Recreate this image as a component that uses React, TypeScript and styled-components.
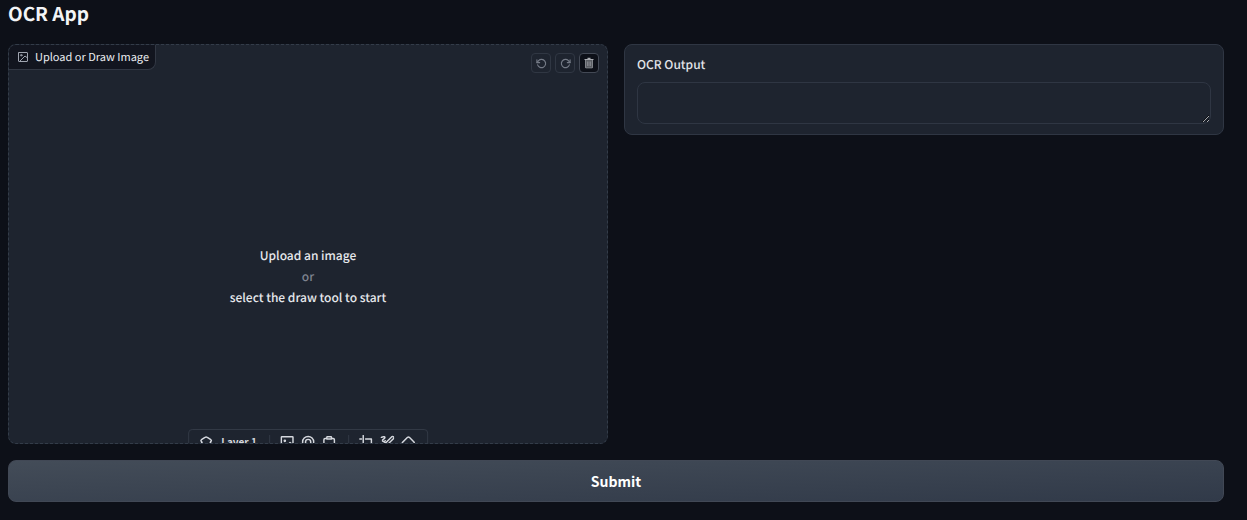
import React from "react";
import styled, { createGlobalStyle, css } from "styled-components";

const GlobalStyle = createGlobalStyle`
  *, *::before, *::after { box-sizing: border-box; }
  body {
    margin: 0;
    background: #0d1018;
    color: #eceef2;
    font-family: "Source Sans Pro", "Noto Sans CJK SC", sans-serif;
    text-rendering: geometricPrecision;
  }
`;

const Page = styled.main`
  display: flex;
  flex-direction: column;
  gap: 16px;
  padding: 0 23px 16px 8px;
`;

const Title = styled.h1`
  margin: 0;
  font-size: 19px;
  line-height: 28px;
  font-weight: 700;
  color: #f3f4f6;
`;

const Columns = styled.div`
  display: grid;
  grid-template-columns: 1fr 1fr;
  align-items: start;
  gap: 16px;
`;

const Editor = styled.section`
  position: relative;
  display: flex;
  align-items: center;
  justify-content: center;
  height: 400px;
  overflow: hidden;
  border: 1px dashed #333c49;
  border-radius: 8px;
  background: #1e242f;
`;

const EditorLabel = styled.h2`
  position: absolute;
  top: 0;
  left: 0;
  display: flex;
  align-items: center;
  gap: 6px;
  height: 25px;
  margin: 0;
  padding: 0 6px 1px 8px;
  border: solid #323844;
  border-width: 0 1px 1px 0;
  border-radius: 0 0 8px 0;
  background: #12151f;
  color: #eceef2;
  font-size: 11px;
  line-height: 16px;
  font-weight: 400;

  svg { color: #a0a5b0; }
`;

const Actions = styled.div`
  position: absolute;
  top: 8px;
  right: 8px;
  display: flex;
  gap: 4px;
`;

const ActionButton = styled.button<{ $active?: boolean }>`
  display: flex;
  align-items: center;
  justify-content: center;
  width: 20px;
  height: 20px;
  padding: 0;
  border: 1px solid #303743;
  border-radius: 4px;
  background: transparent;
  color: #747a86;

  ${({ $active }) =>
    $active &&
    css`
      border-color: #434955;
      background: #0d1018;
      color: #a9abb0;
    `}
`;

const Prompt = styled.div`
  padding-top: 65px;
  text-align: center;
  font-size: 12px;
  line-height: 21px;
  font-weight: 500;
  color: #e6e8ec;
`;

const PromptLine = styled.p<{ $muted?: boolean }>`
  margin: 0;
  color: ${({ $muted }) => ($muted ? "#7e838f" : "inherit")};
`;

const Toolbar = styled.div`
  position: absolute;
  top: 384px;
  left: 50%;
  transform: translateX(-50%);
  display: flex;
  align-items: center;
  height: 26px;
  padding: 0 12px 0 10px;
  border: 1px solid #323945;
  border-radius: 4px;
  color: #d5d8de;
`;

const ToolGroup = styled.div`
  display: flex;
  align-items: center;
  gap: 7px;

  & + & {
    margin-left: 12px;
    padding-left: 10px;
    border-left: 1px solid #323945;
  }
`;

const ToolButton = styled.button`
  display: flex;
  align-items: center;
  gap: 8px;
  height: 14px;
  padding: 0;
  border: 0;
  background: none;
  color: inherit;
  font: inherit;
  font-size: 10px;
  line-height: 14px;
  font-weight: 700;
`;

const Output = styled.section`
  padding: 10px 12px;
  border: 1px solid #2f3643;
  border-radius: 8px;
  background: #1e242f;
`;

const OutputLabel = styled.label`
  display: block;
  margin-bottom: 8px;
  font-size: 12px;
  line-height: 19px;
  font-weight: 500;
  color: #e2e4e9;
`;

const OutputText = styled.textarea`
  display: block;
  width: 100%;
  height: 42px;
  padding: 10px;
  border: 1px solid #2f3643;
  border-radius: 8px;
  background: #1e242f;
  color: #f3f4f6;
  color-scheme: dark;
  font: inherit;
  font-size: 12px;
  resize: vertical;
`;

const SubmitButton = styled.button`
  width: 100%;
  height: 42px;
  padding: 0;
  border: 1px solid #414855;
  border-radius: 8px;
  background: linear-gradient(to bottom right, #434c58, #313a49);
  color: #ffffff;
  font: inherit;
  font-size: 14px;
  line-height: 24px;
  font-weight: 700;
`;

type IconProps = {
  size?: number;
  stroke?: number;
  children: React.ReactNode;
};

const Icon = ({ size = 14, stroke = 2, children }: IconProps) => (
  <svg
    width={size}
    height={size}
    viewBox="0 0 24 24"
    fill="none"
    stroke="currentColor"
    strokeWidth={stroke}
    strokeLinecap="round"
    strokeLinejoin="round"
    aria-hidden="true"
  >
    {children}
  </svg>
);

export default function App() {
  return (
    <>
      <GlobalStyle />
      <Page>
        <Title>OCR App</Title>
        <Columns>
          <Editor aria-label="Image editor">
            <EditorLabel>
              <Icon size={12}>
                <rect x="3" y="3" width="18" height="18" rx="1" />
                <circle cx="8.5" cy="8.5" r="1.5" />
                <path d="M21 14l-5-4L5 21" />
              </Icon>
              Upload or Draw Image
            </EditorLabel>
            <Actions>
              <ActionButton type="button" aria-label="Undo">
                <Icon size={11} stroke={2.5}>
                  <path d="M2 4v6h6" />
                  <path d="M3.51 15a9 9 0 1 0 2.13-9.36L2 10" />
                </Icon>
              </ActionButton>
              <ActionButton type="button" aria-label="Redo">
                <Icon size={11} stroke={2.5}>
                  <path d="M22 4v6h-6" />
                  <path d="M20.49 15a9 9 0 1 1-2.12-9.36L22 10" />
                </Icon>
              </ActionButton>
              <ActionButton type="button" aria-label="Clear" $active>
                <svg width="12" height="12" viewBox="0 0 32 32" fill="currentColor" aria-hidden="true">
                  <path d="M8 8h16v20H8z" opacity="0.5" />
                  <path d="M12 12h2v12h-2zM18 12h2v12h-2zM12 2h8v3h-8z" />
                  <path d="M4 5v3h2v20a2 2 0 0 0 2 2h16a2 2 0 0 0 2-2V8h2V5zm4 23V8h16v20z" />
                </svg>
              </ActionButton>
            </Actions>
            <Prompt>
              <PromptLine>Upload an image</PromptLine>
              <PromptLine $muted>or</PromptLine>
              <PromptLine>select the draw tool to start</PromptLine>
            </Prompt>
            <Toolbar>
              <ToolGroup>
                <ToolButton type="button">
                  <Icon stroke={2.5}>
                    <path d="M10 4q2-1.5 4 0l6 4q2 2 0 3l-1 2 2 2-9 7-9-7 2-2-1-2q-2-1 0-3z" />
                  </Icon>
                  Layer 1
                </ToolButton>
              </ToolGroup>
              <ToolGroup>
                <ToolButton type="button" aria-label="Upload image">
                  <Icon stroke={2.5}>
                    <rect x="2" y="3" width="20" height="19" rx="1" />
                    <circle cx="8" cy="10" r="1" />
                    <path d="M22 17l-5-4L8 22" />
                  </Icon>
                </ToolButton>
                <ToolButton type="button" aria-label="Use webcam">
                  <Icon stroke={2.5}>
                    <circle cx="12" cy="12" r="9.5" />
                    <circle cx="12" cy="12" r="4.5" />
                  </Icon>
                </ToolButton>
                <ToolButton type="button" aria-label="Paste from clipboard">
                  <Icon stroke={2.5}>
                    <path d="M7 6H5a2 2 0 0 0-2 2v14h18V8a2 2 0 0 0-2-2h-2" />
                    <path d="M8 7V4q0-1 1-1h6q1 0 1 1v3z" />
                  </Icon>
                </ToolButton>
              </ToolGroup>
              <ToolGroup>
                <ToolButton type="button" aria-label="Crop">
                  <Icon stroke={2.5}>
                    <path d="M7 1v17h16M1 7h3M11 7h10v16" />
                  </Icon>
                </ToolButton>
                <ToolButton type="button" aria-label="Draw">
                  <Icon stroke={2.5}>
                    <path d="M2 4c4-2 7-1 6 1s-5 3-4 5 4 1 5 0" />
                    <path d="M20 3L10 13c-3 0-5 2-5 7 5 0 8-1 8-4L24 5q-1-3-4-2" />
                  </Icon>
                </ToolButton>
                <ToolButton type="button" aria-label="Erase">
                  <Icon stroke={2.5}>
                    <path d="M11 4q1.5-1 3 0l8 8q1 1.5 0 3l-7 7H8l-6-6q-1-1.5 0-3z" />
                  </Icon>
                </ToolButton>
              </ToolGroup>
            </Toolbar>
          </Editor>
          <Output>
            <OutputLabel htmlFor="ocr-output">OCR Output</OutputLabel>
            <OutputText id="ocr-output" />
          </Output>
        </Columns>
        <SubmitButton type="button">Submit</SubmitButton>
      </Page>
    </>
  );
}
